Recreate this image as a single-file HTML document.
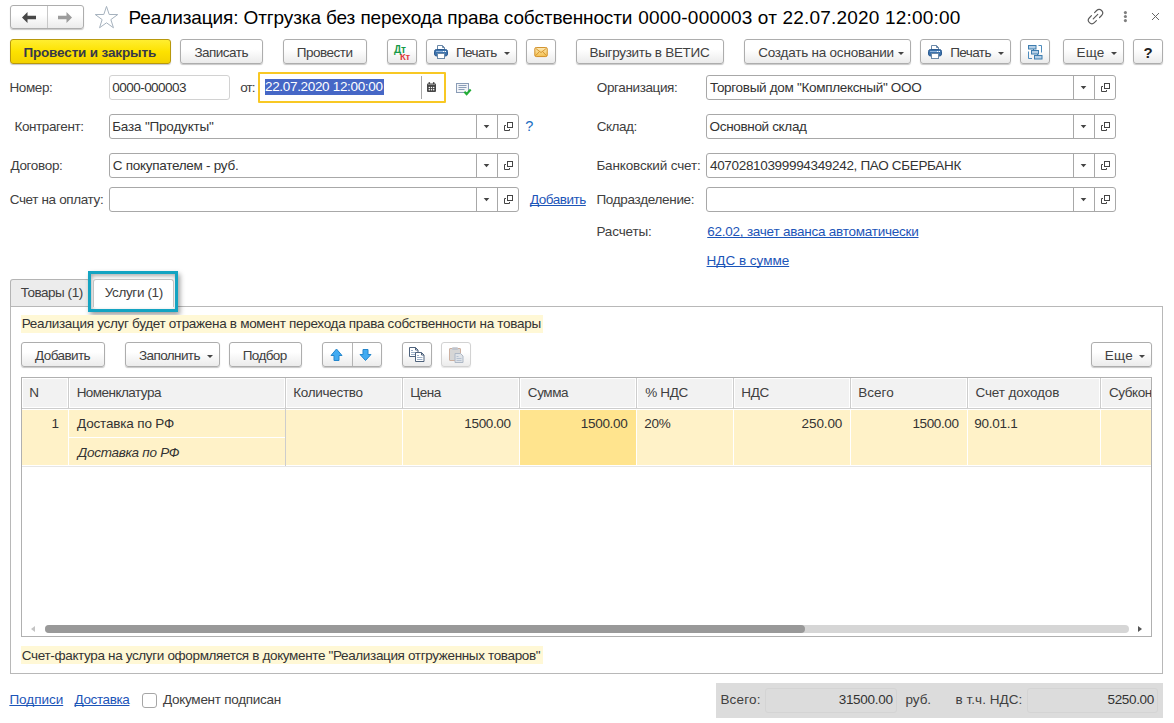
<!DOCTYPE html>
<html lang="ru">
<head>
<meta charset="utf-8">
<title>Реализация</title>
<style>
html,body{margin:0;padding:0;}
body{width:1174px;height:723px;position:relative;overflow:hidden;background:#fff;font-family:"Liberation Sans",Arial,sans-serif;font-size:13px;color:#333;}
.a{position:absolute;box-sizing:border-box;white-space:nowrap;}
.btn{position:absolute;box-sizing:border-box;height:25px;top:39px;border:1px solid #adadad;border-radius:3px;background:linear-gradient(#ffffff 0%,#ffffff 40%,#ebebeb 100%);box-shadow:0 1px 1px rgba(0,0,0,.22);text-align:center;line-height:25px;font-size:13.5px;color:#404040;white-space:nowrap;}
.btn.y{background:linear-gradient(#ffee30,#fde200 50%,#f3d200);border-color:#b8980c;font-weight:bold;color:#36384a;}
.lbl{position:absolute;white-space:nowrap;font-size:13.5px;line-height:15px;color:#404040;}
.fld{position:absolute;box-sizing:border-box;height:24px;border:1px solid #a8a8a8;border-radius:3px;background:#fff;font-size:13.5px;line-height:23px;padding-left:3px;color:#333;white-space:nowrap;overflow:hidden;}
.fld .dd{position:absolute;top:0;bottom:0;width:1px;background:#c8c8c8;}
.fld.cb{width:410px;height:25px;background-repeat:no-repeat;}
.fld.cb::before{content:"";position:absolute;right:41px;top:0;bottom:0;width:1px;background:#a8a8a8;}
.fld.cb::after{content:"";position:absolute;right:20px;top:0;bottom:0;width:1px;background:#a8a8a8;}
.tri{position:absolute;width:0;height:0;border-left:3px solid transparent;border-right:3px solid transparent;border-top:3px solid #444;}
.lnk{position:absolute;white-space:nowrap;font-size:13.5px;line-height:15px;color:#1c55b8;text-decoration:underline;text-decoration-skip-ink:none;}
.th{position:absolute;top:0;height:31px;box-sizing:border-box;border-right:1px solid #d4d4d4;line-height:30px;padding-left:8px;color:#444;}
.td{position:absolute;box-sizing:border-box;border-right:1px solid #fff;line-height:28px;color:#333;}
</style>
<style id="tune">
#tta{letter-spacing:-0.111px;position:relative;left:-0.49px;}
#ttb{letter-spacing:0.187px;position:relative;left:0.24px;}
#tb2{letter-spacing:-0.522px;position:relative;left:-0.35px;}
#tb3{letter-spacing:-0.486px;position:relative;left:-0.42px;}
#tb4{letter-spacing:-0.599px;margin-left:-1.00px;margin-right:1.00px;}
#tb5{letter-spacing:-0.305px;position:relative;left:-0.57px;}
#tb6{letter-spacing:-0.216px;margin-left:0.20px;margin-right:-0.20px;}
#tb7{letter-spacing:-0.585px;margin-left:-0.88px;margin-right:0.88px;}
#tb8{letter-spacing:0.211px;margin-left:-0.56px;margin-right:0.56px;}
#l1{letter-spacing:-0.372px;margin-left:-0.60px;margin-right:0.60px;}
#f1{letter-spacing:-0.550px;position:relative;left:-0.65px;}
#l2{letter-spacing:-0.951px;margin-left:-0.84px;margin-right:0.84px;}
#f2{letter-spacing:-0.327px;margin-left:0.00px;margin-right:0.00px;}
#l3{letter-spacing:-0.383px;margin-left:-0.19px;margin-right:0.19px;}
#f3{letter-spacing:-0.308px;position:relative;left:0.00px;}
#l4{letter-spacing:-0.391px;margin-left:-0.59px;margin-right:0.59px;}
#f4{letter-spacing:-0.188px;position:relative;left:-0.80px;}
#l5{letter-spacing:-0.455px;margin-left:-0.33px;margin-right:0.33px;}
#f5{letter-spacing:-0.336px;position:relative;left:-0.42px;}
#l6{letter-spacing:-0.339px;margin-left:0.46px;margin-right:-0.46px;}
#f6{letter-spacing:-0.275px;position:relative;left:-0.23px;}
#l7{letter-spacing:-0.147px;margin-left:-0.60px;margin-right:0.60px;}
#f7{letter-spacing:-0.329px;position:relative;left:0.00px;}
#l8{letter-spacing:-0.360px;margin-left:-0.33px;margin-right:0.33px;}
#k1{letter-spacing:-0.469px;margin-left:-0.12px;margin-right:0.12px;}
#l9{letter-spacing:-0.310px;margin-left:-0.54px;margin-right:0.54px;}
#l10{letter-spacing:-0.142px;margin-left:-0.60px;margin-right:0.60px;}
#k2{letter-spacing:-0.238px;margin-left:0.27px;margin-right:-0.27px;}
#k3{letter-spacing:-0.011px;margin-left:-0.45px;margin-right:0.45px;}
#t1{letter-spacing:-0.475px;margin-left:-0.26px;margin-right:0.26px;}
#t2{letter-spacing:-0.377px;margin-left:-0.19px;margin-right:0.19px;}
#i1{letter-spacing:-0.300px;margin-left:-0.38px;margin-right:0.38px;}
#b1{letter-spacing:-0.597px;position:relative;left:-0.52px;}
#b2{letter-spacing:-0.608px;margin-left:-0.96px;margin-right:0.96px;}
#b3{letter-spacing:-0.590px;position:relative;left:-0.84px;}
#b4{letter-spacing:0.204px;margin-left:-1.15px;margin-right:1.15px;}
#h1{letter-spacing:0.000px;margin-left:-0.80px;margin-right:0.80px;}
#h2{letter-spacing:-0.532px;margin-left:-0.36px;margin-right:0.36px;}
#h3{letter-spacing:-0.310px;margin-left:-0.72px;margin-right:0.72px;}
#h4{letter-spacing:-0.461px;margin-left:-0.86px;margin-right:0.86px;}
#h5{letter-spacing:-0.449px;margin-left:-0.17px;margin-right:0.17px;}
#h6{letter-spacing:-0.306px;margin-left:0.18px;margin-right:-0.18px;}
#h7{letter-spacing:-0.293px;margin-left:-0.69px;margin-right:0.69px;}
#h8{letter-spacing:-0.008px;margin-left:-0.72px;margin-right:0.72px;}
#h9{letter-spacing:-0.118px;margin-left:-0.56px;margin-right:0.56px;}
#c1{letter-spacing:0.000px;margin-left:0.62px;margin-right:-0.62px;}
#c2{letter-spacing:-0.164px;margin-left:0.00px;margin-right:-0.00px;}
#c3{letter-spacing:-0.279px;margin-left:0.78px;margin-right:-0.78px;}
#c4{letter-spacing:-0.362px;margin-left:0.11px;margin-right:-0.11px;}
#c5{letter-spacing:-0.312px;margin-left:-0.06px;margin-right:0.06px;}
#c6{letter-spacing:-0.159px;margin-left:0.15px;margin-right:-0.15px;}
#c7{letter-spacing:-0.112px;margin-left:0.22px;margin-right:-0.22px;}
#c8{letter-spacing:-0.378px;margin-left:0.03px;margin-right:-0.03px;}
#c9{letter-spacing:-0.238px;margin-left:-0.88px;margin-right:0.88px;}
#i2{letter-spacing:-0.351px;margin-left:-0.15px;margin-right:0.15px;}
#k4{letter-spacing:-0.013px;margin-left:-0.64px;margin-right:0.64px;}
#k5{letter-spacing:-0.393px;margin-left:-0.44px;margin-right:0.44px;}
#l11{letter-spacing:-0.271px;margin-left:0.00px;margin-right:-0.00px;}
#s1{letter-spacing:0.171px;margin-left:-1.63px;margin-right:1.63px;}
#s2{letter-spacing:-0.273px;margin-left:-0.24px;margin-right:0.24px;}
#s3{letter-spacing:-0.068px;margin-left:-0.44px;margin-right:0.44px;}
#s4{letter-spacing:0.047px;margin-left:-0.47px;margin-right:0.47px;}
#s5{letter-spacing:-0.326px;margin-left:-0.50px;margin-right:0.50px;}
#tb1{letter-spacing:-0.15px;position:relative;left:-0.8px;}
</style>
</head>
<body>

<!-- title row -->
<div class="a" id="nav" style="left:10px;top:5px;width:74px;height:24px;border:1px solid #adadad;border-radius:3px;background:linear-gradient(#fff 0%,#fff 40%,#ebebeb 100%);box-shadow:0 1px 1px rgba(0,0,0,.22);">
  <div class="a" style="left:36px;top:0;width:1px;height:22px;background:#c8c8c8;"></div>
  <svg class="a" style="left:0;top:0" width="72" height="22" viewBox="0 0 72 22">
    <path d="M11 11.5 L16.5 6 V9.7 H25 V13.3 H16.5 V17 Z" fill="#484848"/>
    <path d="M61 11.5 L55.5 6 V9.7 H47 V13.3 H55.5 V17 Z" fill="#9c9c9c"/>
  </svg>
</div>
<svg class="a" style="left:94px;top:5px" width="24" height="24" viewBox="0 0 24 24">
  <path d="M12.50 1.40 L15.20 9.48 L23.72 9.55 L16.87 14.62 L19.44 22.75 L12.50 17.80 L5.56 22.75 L8.13 14.62 L1.28 9.55 L9.80 9.48 Z" fill="#fff" stroke="#a6b2be" stroke-width="1"/>
</svg>
<div class="a" id="title" style="left:129px;top:6px;font-size:19px;line-height:24px;color:#000;"><span id="tta">Реализация: Отгрузка без перехода права собственности</span> <span id="ttb">0000-000003 от 22.07.2020 12:00:00</span></div>
<svg class="a" style="left:1084px;top:4px" width="84" height="26" viewBox="0 0 84 26">
  <g transform="translate(11.5 12.6) rotate(-45)" fill="none" stroke="#5a5a5a" stroke-width="1.15" stroke-linecap="round">
    <path d="M2.2 -3.5 L5.1 -3.5 A3.5 3.5 0 0 1 5.100 3.5 L2.200 3.5"/>
    <path d="M-2.2 -3.5 L-5.1 -3.5 A3.5 3.5 0 0 0 -5.100 3.5 L-2.200 3.5"/>
    <path d="M-3.2 0 L3.2 0"/>
  </g>
  <circle cx="41.4" cy="8.6" r="1.55" fill="#7e7e7e"/><circle cx="41.4" cy="12.500" r="1.55" fill="#7e7e7e"/><circle cx="41.4" cy="16.600" r="1.55" fill="#7e7e7e"/>
  <path d="M68 9 L75 16 M75 9 L68 16" stroke="#666" stroke-width="1" fill="none"/>
</svg>

<!-- toolbar -->
<div class="btn y" style="left:10px;width:161px;"><span id="tb1">Провести и закрыть</span></div>
<div class="btn" style="left:180px;width:83px;"><span id="tb2">Записать</span></div>
<div class="btn" style="left:283px;width:84px;"><span id="tb3">Провести</span></div>
<div class="btn" style="left:387px;width:30px;">
  <span class="a" style="left:6px;top:5px;font-size:10px;font-weight:bold;line-height:10px;color:#169a48;letter-spacing:-0.2px;">Дт</span>
  <span class="a" style="left:12px;top:11.500px;font-size:9.5px;font-weight:bold;line-height:10px;color:#e23c3c;letter-spacing:-0.2px;">Кт</span>
</div>
<div class="btn" style="left:426px;width:91px;"><svg class="a" style="left:7px;top:5px" width="15" height="14" viewBox="0 0 15 14">
    <path d="M3.500 5 V0.500 H8.500 L10.500 2.500 V5 Z" fill="#fff" stroke="#6a88a8"/>
    <path d="M8.500 0.500 V2.500 H10.500" fill="none" stroke="#6a88a8"/>
    <rect x="0.500" y="4.500" width="13" height="6.500" rx="2" fill="#3c72ac" stroke="#2d5c92"/>
    <path d="M2 6.500 H12" stroke="#8fb4dc"/>
    <rect x="9" y="6" width="1" height="1" fill="#fff"/><rect x="11" y="6" width="1" height="1" fill="#fff"/>
    <rect x="3.500" y="8.500" width="7" height="5" fill="#fff" stroke="#6a88a8"/>
  </svg><span class="a" style="left:30px;top:0;" id="tb4">Печать</span><div class="tri" style="left:77px;top:12px;"></div></div>
<div class="btn" style="left:526px;width:30px;"><svg class="a" style="left:7px;top:7px" width="15" height="11" viewBox="0 0 15 11.5">
    <defs><linearGradient id="mg" x1="0" y1="0" x2="0" y2="1"><stop offset="0" stop-color="#fdeab8"/><stop offset="1" stop-color="#f3c050"/></linearGradient></defs>
    <rect x="0.500" y="0.500" width="13" height="9.500" rx="1.500" fill="url(#mg)" stroke="#d08c22"/>
    <path d="M1.500 1.500 L7 5.800 L12.500 1.500 M1.500 9 L5.300 4.800 M12.500 9 L8.700 4.800" fill="none" stroke="#d08c22" stroke-width="0.9"/>
  </svg></div>
<div class="btn" style="left:576px;width:148px;"><span id="tb5">Выгрузить в ВЕТИС</span></div>
<div class="btn" style="left:744px;width:167px;"><span class="a" style="left:13px;top:0;" id="tb6">Создать на основании</span><div class="tri" style="left:153px;top:12px;"></div></div>
<div class="btn" style="left:920px;width:91px;"><svg class="a" style="left:7px;top:5px" width="15" height="14" viewBox="0 0 15 14">
    <path d="M3.500 5 V0.500 H8.500 L10.500 2.500 V5 Z" fill="#fff" stroke="#6a88a8"/>
    <path d="M8.500 0.500 V2.500 H10.500" fill="none" stroke="#6a88a8"/>
    <rect x="0.500" y="4.500" width="13" height="6.500" rx="2" fill="#3c72ac" stroke="#2d5c92"/>
    <path d="M2 6.500 H12" stroke="#8fb4dc"/>
    <rect x="9" y="6" width="1" height="1" fill="#fff"/><rect x="11" y="6" width="1" height="1" fill="#fff"/>
    <rect x="3.500" y="8.500" width="7" height="5" fill="#fff" stroke="#6a88a8"/>
  </svg><span class="a" style="left:30px;top:0;" id="tb7">Печать</span><div class="tri" style="left:77px;top:12px;"></div></div>
<div class="btn" style="left:1020px;width:30px;"><svg class="a" style="left:7px;top:5px" width="15" height="15" viewBox="0 0 15 15">
    <g fill="#b4cfe6" stroke="#3d7cae"><rect x="0.500" y="0.500" width="7.500" height="3.500"/><rect x="3.500" y="5.500" width="7" height="3.500"/><rect x="6.500" y="10.500" width="7.500" height="3.500"/></g>
    <path d="M5.500 4 V5.500 M9.500 9 V10.500" stroke="#3d7cae"/>
    <path d="M10.500 0.500 H13.500 V7.500 M0.500 6.500 V13.500 H4" fill="none" stroke="#4d8cbe"/>
  </svg></div>
<div class="btn" style="left:1063px;width:61px;"><span class="a" style="left:13px;top:0;" id="tb8">Еще</span><div class="tri" style="left:47px;top:12px;"></div></div>
<div class="btn" style="left:1133px;width:30px;font-weight:bold;font-size:15px;color:#222;">?</div>


<!-- form rows -->
<div class="lbl" style="left:10px;top:80px;" id="l1">Номер:</div>
<div class="fld" style="left:109px;top:75px;width:121px;height:25px;border-color:#d2d2d2;" ><span id="f1">0000-000003</span></div>
<div class="lbl" style="left:241px;top:80px;" id="l2">от:</div>
<div class="a" style="left:258px;top:72px;width:188px;height:31px;border:2px solid #f8c824;border-radius:1px;background:#fff;">
  <div class="a" style="left:5px;top:5px;width:119px;height:16px;background:#4667c6;"></div>
  <div class="a" style="left:5px;top:5px;line-height:16px;color:#fff;font-size:13.5px;" id="f2">22.07.2020 12:00:00</div>
  <div class="a" style="left:161px;top:2px;width:1px;height:23px;background:#a8a8a8;"></div>
  <svg class="a" style="left:167px;top:8px" width="10" height="10" viewBox="0 0 10 10">
    <rect x="0" y="1.500" width="9" height="8.500" rx="1" fill="#474747"/>
    <rect x="1.500" y="0" width="1.600" height="2.500" rx="0.800" fill="#474747"/><rect x="5.900" y="0" width="1.600" height="2.500" rx="0.800" fill="#474747"/>
    <rect x="1" y="2" width="7" height="1" fill="#8a8a8a"/>
    <g fill="#fff"><circle cx="2.300" cy="5.400" r="0.750"/><circle cx="4.500" cy="5.400" r="0.750"/><circle cx="6.700" cy="5.400" r="0.750"/><circle cx="2.300" cy="7.700" r="0.750"/><circle cx="4.500" cy="7.700" r="0.750"/><circle cx="6.700" cy="7.700" r="0.750"/></g>
  </svg>
</div>
<svg class="a" style="left:455px;top:82px" width="18" height="14" viewBox="0 0 18 14">
  <rect x="1.500" y="1.500" width="12" height="9" fill="#f2f4f7" stroke="#8a9cb6"/>
  <path d="M3.500 3.500 H11.500 M3.500 5.500 H11.500 M3.500 7.500 H9.500" stroke="#8c9eb8" stroke-width="1"/>
  <path d="M9.400 9.800 L11.600 12.100 L15.700 7.500" stroke="#22ad36" stroke-width="2.100" fill="none"/>
</svg>

<div class="lbl" style="left:597px;top:80px;" id="l3">Организация:</div>
<div class="fld cb" style="left:706px;top:75px;"><span id="f3">Торговый дом "Комплексный" ООО</span><svg class="a" style="right:0;top:0" width="42" height="23" viewBox="0 0 42 23"><path d="M7.700 10 H13.300 L10.500 13.200 Z" fill="#444"/><rect x="31.500" y="7.500" width="5" height="5" fill="none" stroke="#444"/><path d="M30 10.500 H28.500 V15.500 H33.500 V14" fill="none" stroke="#444"/></svg></div>

<div class="lbl" style="left:15px;top:119px;" id="l4">Контрагент:</div>
<div class="fld cb" style="left:109px;top:114px;"><span id="f4">База "Продукты"</span><svg class="a" style="right:0;top:0" width="42" height="23" viewBox="0 0 42 23"><path d="M7.700 10 H13.300 L10.500 13.200 Z" fill="#444"/><rect x="31.500" y="7.500" width="5" height="5" fill="none" stroke="#444"/><path d="M30 10.500 H28.500 V15.500 H33.500 V14" fill="none" stroke="#444"/></svg></div>
<div class="a" style="left:525.200px;top:119px;font-size:14.500px;line-height:15px;color:#1b6ec2;" id="q1">?</div>
<div class="lbl" style="left:597px;top:119px;" id="l5">Склад:</div>
<div class="fld cb" style="left:706px;top:114px;"><span id="f5">Основной склад</span><svg class="a" style="right:0;top:0" width="42" height="23" viewBox="0 0 42 23"><path d="M7.700 10 H13.300 L10.500 13.200 Z" fill="#444"/><rect x="31.500" y="7.500" width="5" height="5" fill="none" stroke="#444"/><path d="M30 10.500 H28.500 V15.500 H33.500 V14" fill="none" stroke="#444"/></svg></div>

<div class="lbl" style="left:10px;top:158px;" id="l6">Договор:</div>
<div class="fld cb" style="left:109px;top:153px;"><span id="f6">С покупателем - руб.</span><svg class="a" style="right:0;top:0" width="42" height="23" viewBox="0 0 42 23"><path d="M7.700 10 H13.300 L10.500 13.200 Z" fill="#444"/><rect x="31.500" y="7.500" width="5" height="5" fill="none" stroke="#444"/><path d="M30 10.500 H28.500 V15.500 H33.500 V14" fill="none" stroke="#444"/></svg></div>
<div class="lbl" style="left:597px;top:158px;" id="l7">Банковский счет:</div>
<div class="fld cb" style="left:706px;top:153px;"><span id="f7">40702810399994349242, ПАО СБЕРБАНК</span><svg class="a" style="right:0;top:0" width="42" height="23" viewBox="0 0 42 23"><path d="M7.700 10 H13.300 L10.500 13.200 Z" fill="#444"/><rect x="31.500" y="7.500" width="5" height="5" fill="none" stroke="#444"/><path d="M30 10.500 H28.500 V15.500 H33.500 V14" fill="none" stroke="#444"/></svg></div>

<div class="lbl" style="left:10px;top:192px;" id="l8">Счет на оплату:</div>
<div class="fld cb" style="left:109px;top:187px;"><svg class="a" style="right:0;top:0" width="42" height="23" viewBox="0 0 42 23"><path d="M7.700 10 H13.300 L10.500 13.200 Z" fill="#444"/><rect x="31.500" y="7.500" width="5" height="5" fill="none" stroke="#444"/><path d="M30 10.500 H28.500 V15.500 H33.500 V14" fill="none" stroke="#444"/></svg></div>
<div class="lnk" style="left:530px;top:192px;" id="k1">Добавить</div>
<div class="lbl" style="left:597px;top:192px;" id="l9">Подразделение:</div>
<div class="fld cb" style="left:706px;top:187px;"><svg class="a" style="right:0;top:0" width="42" height="23" viewBox="0 0 42 23"><path d="M7.700 10 H13.300 L10.500 13.200 Z" fill="#444"/><rect x="31.500" y="7.500" width="5" height="5" fill="none" stroke="#444"/><path d="M30 10.500 H28.500 V15.500 H33.500 V14" fill="none" stroke="#444"/></svg></div>

<div class="lbl" style="left:597px;top:224px;" id="l10">Расчеты:</div>
<div class="lnk" style="left:707px;top:224px;" id="k2">62.02, зачет аванса автоматически</div>
<div class="lnk" style="left:707px;top:253px;" id="k3">НДС в сумме</div>


<!-- tabs + panel -->
<div class="a" id="panel" style="left:10px;top:306px;width:1153px;height:368px;border:1px solid #b8b8b8;background:#fff;"></div>
<div class="a" id="tab1" style="left:10px;top:279px;width:80px;height:28px;border:1px solid #b4b4b4;border-bottom-color:#b8b8b8;border-radius:3px 3px 0 0;background:#ececec;"></div>
<div class="lbl" style="left:21px;top:285px;" id="t1">Товары (1)</div>
<div class="a" id="hl" style="left:88px;top:271px;width:90px;height:41px;border:3px solid #14a4c2;background:#fff;box-shadow:2px 3px 5px rgba(0,0,0,.38), inset 1px 2px 4px rgba(0,0,0,.32);"></div>
<div class="a" id="tab2" style="left:93px;top:279px;width:81px;height:28px;border:1px solid #c2c2c2;border-bottom:none;border-radius:3px 3px 0 0;background:#fff;"></div>
<div class="lbl" style="left:105px;top:285px;" id="t2">Услуги (1)</div>

<div class="a" style="left:21px;top:315px;width:522px;height:18px;background:#fff8d6;"></div>
<div class="lbl" style="left:22px;top:316px;color:#333;" id="i1">Реализация услуг будет отражена в момент перехода права собственности на товары</div>

<div class="btn" style="top:342px;left:21px;width:84px;"><span id="b1">Добавить</span></div>
<div class="btn" style="top:342px;left:125px;width:95px;"><span class="a" style="left:14px;top:0;" id="b2">Заполнить</span><div class="tri" style="left:81px;top:12px;"></div></div>
<div class="btn" style="top:342px;left:229px;width:73px;"><span id="b3">Подбор</span></div>
<div class="btn" style="top:342px;left:322px;width:60px;"><div class="a" style="left:29px;top:0;width:1px;height:23px;background:#b4b4b4;"></div>
  <svg class="a" style="left:0;top:0" width="58" height="24" viewBox="0 0 58 24">
    <path d="M13.500 6 L19 12.500 H16 V17.500 H11 V12.500 H8 Z" fill="#41abf2" stroke="#2486cc" stroke-width="1" stroke-linejoin="round"/>
    <path d="M42.500 17.500 L48 11.500 H45 V6.500 H40 V11.500 H37 Z" fill="#41abf2" stroke="#2486cc" stroke-width="1" stroke-linejoin="round"/>
  </svg></div>
<div class="btn" style="top:342px;left:402px;width:30px;">
  <svg class="a" style="left:6px;top:4px" width="17" height="17" viewBox="0 0 17 17">
    <path d="M0.500 0.500 H6.500 L9 3 V9.500 H0.500 Z" fill="#fff" stroke="#4e627c"/>
    <path d="M6.500 0.500 V3 H9" fill="none" stroke="#4e627c"/>
    <path d="M2 3.500 H4 M2 5.500 H7 M2 7.500 H6" stroke="#9cb0c8"/>
    <path d="M6.500 5.500 H12.500 L15 8 V14.500 H6.500 Z" fill="#fff" stroke="#4e627c"/>
    <path d="M12.500 5.500 V8 H15" fill="none" stroke="#4e627c"/>
    <path d="M8 8.500 H10 M8 10.500 H13.500 M8 12.500 H13.500" stroke="#9cb0c8"/>
  </svg></div>
<div class="btn" style="top:342px;left:441px;width:30px;border-color:#d2d2d2;box-shadow:0 1px 1px rgba(0,0,0,.10);">
  <svg class="a" style="left:7px;top:4px" width="16" height="17" viewBox="0 0 16 17">
    <rect x="0.500" y="1.500" width="11" height="12" rx="0.500" fill="#d6d6d6" stroke="#cdb0a0"/>
    <rect x="3" y="0.300" width="6" height="2.700" rx="1" fill="#c0c4cc"/>
    <path d="M6 6.500 H11.500 L14 9 V15.500 H6 Z" fill="#dfe3e8" stroke="#aeb8c6"/>
    <path d="M7.500 9.500 H9.500 M7.500 11.500 H12.500 M7.500 13.500 H12.500" stroke="#b6c2d2"/>
  </svg></div>
<div class="btn" style="top:342px;left:1091px;width:61px;"><span class="a" style="left:14px;top:0;" id="b4">Еще</span><div class="tri" style="left:47px;top:12px;"></div></div>

<!-- table -->
<div class="a" id="tbl" style="left:21px;top:377px;width:1131px;height:260px;border:1px solid #b0b0b0;background:#fff;overflow:hidden;">
  <div class="a" style="left:1px;top:1px;width:44px;height:28px;background:#f2f2f2;"></div>
  <div class="a" style="left:48px;top:1px;width:214px;height:28px;background:#f2f2f2;"></div>
  <div class="a" style="left:265px;top:1px;width:114px;height:28px;background:#f2f2f2;"></div>
  <div class="a" style="left:382px;top:1px;width:114px;height:28px;background:#f2f2f2;"></div>
  <div class="a" style="left:499px;top:1px;width:114px;height:28px;background:#f2f2f2;"></div>
  <div class="a" style="left:616px;top:1px;width:94px;height:28px;background:#f2f2f2;"></div>
  <div class="a" style="left:713px;top:1px;width:114px;height:28px;background:#f2f2f2;"></div>
  <div class="a" style="left:830px;top:1px;width:114px;height:28px;background:#f2f2f2;"></div>
  <div class="a" style="left:947px;top:1px;width:130px;height:28px;background:#f2f2f2;"></div>
  <div class="a" style="left:1080px;top:1px;width:49px;height:28px;background:#f2f2f2;"></div>
  <div class="a" style="left:46px;top:0;width:1px;height:31px;background:#cdcdcd;"></div>
  <div class="a" style="left:263px;top:0;width:1px;height:31px;background:#cdcdcd;"></div>
  <div class="a" style="left:380px;top:0;width:1px;height:31px;background:#cdcdcd;"></div>
  <div class="a" style="left:497px;top:0;width:1px;height:31px;background:#cdcdcd;"></div>
  <div class="a" style="left:614px;top:0;width:1px;height:31px;background:#cdcdcd;"></div>
  <div class="a" style="left:711px;top:0;width:1px;height:31px;background:#cdcdcd;"></div>
  <div class="a" style="left:828px;top:0;width:1px;height:31px;background:#cdcdcd;"></div>
  <div class="a" style="left:945px;top:0;width:1px;height:31px;background:#cdcdcd;"></div>
  <div class="a" style="left:1078px;top:0;width:1px;height:31px;background:#cdcdcd;"></div>
  <div class="a" style="left:0;top:30px;width:1129px;height:1px;background:#cdcdcd;"></div>
  <div class="a" style="left:0;top:32px;width:1129px;height:55px;background:#fff2c8;"></div>
  <div class="a" style="left:498px;top:32px;width:116px;height:55px;background:#ffe48e;"></div>
  <div class="a" style="left:46px;top:32px;width:1px;height:55px;background:#fff;"></div>
  <div class="a" style="left:263px;top:31px;width:1px;height:58px;background:#cdcdcd;"></div>
  <div class="a" style="left:380px;top:32px;width:1px;height:55px;background:#fff;"></div>
  <div class="a" style="left:497px;top:32px;width:1px;height:55px;background:#fff;"></div>
  <div class="a" style="left:614px;top:32px;width:1px;height:55px;background:#fff;"></div>
  <div class="a" style="left:711px;top:32px;width:1px;height:55px;background:#fff;"></div>
  <div class="a" style="left:828px;top:32px;width:1px;height:55px;background:#fff;"></div>
  <div class="a" style="left:945px;top:32px;width:1px;height:55px;background:#fff;"></div>
  <div class="a" style="left:1078px;top:32px;width:1px;height:55px;background:#fff;"></div>
  <div class="a" style="left:47px;top:59px;width:216px;height:1px;background:#fff;"></div>
  <div class="a" style="left:0;top:88px;width:1129px;height:1px;background:#e6e6e6;"></div>
  <div class="lbl" style="left:8px;top:7px;" id="h1">N</div>
  <div class="lbl" style="left:55px;top:7px;" id="h2">Номенклатура</div>
  <div class="lbl" style="left:272px;top:7px;" id="h3">Количество</div>
  <div class="lbl" style="left:389px;top:7px;" id="h4">Цена</div>
  <div class="lbl" style="left:506px;top:7px;" id="h5">Сумма</div>
  <div class="lbl" style="left:623px;top:7px;" id="h6">% НДС</div>
  <div class="lbl" style="left:720px;top:7px;" id="h7">НДС</div>
  <div class="lbl" style="left:837px;top:7px;" id="h8">Всего</div>
  <div class="lbl" style="left:954px;top:7px;" id="h9">Счет доходов</div>
  <div class="lbl" style="left:1087px;top:7px;letter-spacing:-0.45px;" id="h10">Субкон</div>
  <div class="lbl" style="left:55px;top:38px;color:#333;" id="c2">Доставка по РФ</div>
  <div class="lbl" style="left:55px;top:67px;color:#333;font-style:italic;" id="c3">Доставка по РФ</div>
  <div class="lbl" style="left:622px;top:38px;color:#333;" id="c6">20%</div>
  <div class="lbl" style="left:953px;top:38px;color:#333;" id="c9">90.01.1</div>
  <div class="lbl" style="right:1092.5px;top:38px;color:#333;" id="c1">1</div>
  <div class="lbl" style="right:640.5px;top:38px;color:#333;" id="c4">1500.00</div>
  <div class="lbl" style="right:523.5px;top:38px;color:#333;" id="c5">1500.00</div>
  <div class="lbl" style="right:309px;top:38px;color:#333;" id="c7">250.00</div>
  <div class="lbl" style="right:192.39999999999998px;top:38px;color:#333;" id="c8">1500.00</div>
  <div class="a" style="left:23px;top:247px;width:1084px;height:8px;border-radius:4px;background:#d6d6d6;"></div>
  <div class="a" style="left:23px;top:247px;width:760px;height:8px;border-radius:4px;background:#999;"></div>
  <div class="a" style="left:9px;top:248px;width:0;height:0;border-top:3px solid transparent;border-bottom:3px solid transparent;border-right:4px solid #c4c4c4;"></div>
  <div class="a" style="left:1116px;top:248px;width:0;height:0;border-top:3.5px solid transparent;border-bottom:3.5px solid transparent;border-left:4px solid #555;"></div>
</div>


<div class="a" style="left:21px;top:646px;width:522px;height:18px;background:#fff8d6;"></div>
<div class="lbl" style="left:22px;top:648px;color:#333;" id="i2">Счет-фактура на услуги оформляется в документе "Реализация отгруженных товаров"</div>

<!-- footer -->
<div class="lnk" style="left:10px;top:692px;" id="k4">Подписи</div>
<div class="lnk" style="left:75px;top:692px;" id="k5">Доставка</div>
<div class="a" style="left:142px;top:693px;width:15px;height:15px;border:1px solid #a6a6a6;border-radius:3px;background:#fff;"></div>
<div class="lbl" style="left:163px;top:692px;" id="l11">Документ подписан</div>

<div class="a" style="left:716px;top:683px;width:447px;height:35px;background:#dcdcdc;"></div>
<div class="lbl" style="left:722px;top:692px;" id="s1">Всего:</div>
<div class="a" style="left:765px;top:688px;width:132px;height:25px;border:1px solid #d4d4d4;border-radius:3px;"></div>
<div class="lbl" style="right:281px;top:692px;color:#333;" id="s2">31500.00</div>
<div class="lbl" style="left:906px;top:692px;" id="s3">руб.</div>
<div class="lbl" style="left:956px;top:692px;" id="s4">в т.ч. НДС:</div>
<div class="a" style="left:1027px;top:688px;width:131px;height:25px;border:1px solid #d4d4d4;border-radius:3px;"></div>
<div class="lbl" style="right:19.500px;top:692px;color:#333;" id="s5">5250.00</div>

</body>
</html>
